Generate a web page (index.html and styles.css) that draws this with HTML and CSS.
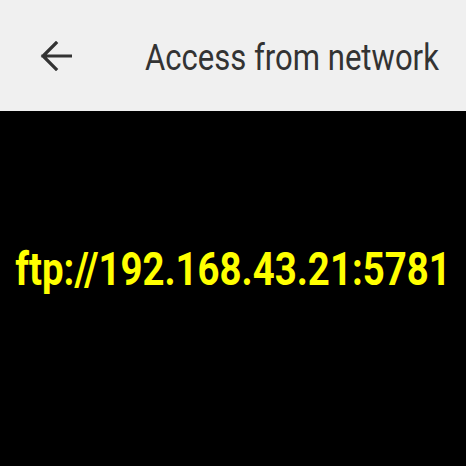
FILE: index.html
```html
<!DOCTYPE html>
<html>
<head>
<meta charset="utf-8">
<link rel="stylesheet" href="styles.css">
</head>
<body>
<header class="bar">
  <svg class="back" width="32" height="30" viewBox="0 0 32 30" aria-hidden="true">
    <path d="M31 15H3M16 2L3 15l13 13" fill="none" stroke="#333" stroke-width="3.2" stroke-linecap="square" stroke-linejoin="miter"/>
  </svg>
  <h1 class="title">Access from network</h1>
</header>
<main class="content">
  <p class="url">ftp://192.168.43.21:5781</p>
</main>
</body>
</html>
```
FILE: styles.css
```css
html, body {
  margin: 0;
  padding: 0;
  width: 466px;
  height: 466px;
  background: #000;
  overflow: hidden;
}
.bar {
  height: 111px;
  background: #f0f0f0;
  display: flex;
  align-items: flex-start;
  padding: 40px 0 0 40px;
  box-sizing: border-box;
}
.back {
  display: block;
  flex-shrink: 0;
  margin-top: 1px;
}
.title {
  flex-shrink: 0;
  margin: 0 0 0 73px;
  font-family: Roboto, "Noto Sans", sans-serif;
  font-weight: 400;
  font-size: 36px;
  line-height: 1;
  color: #333;
  white-space: nowrap;
  transform: scaleX(0.863);
  transform-origin: left center;
}
.content {
  height: 355px;
  padding-top: 135px;
  box-sizing: border-box;
  display: flex;
  justify-content: center;
  align-items: flex-start;
}
.url {
  flex-shrink: 0;
  margin: 0;
  font-family: Roboto, "Noto Sans", sans-serif;
  font-weight: 700;
  font-size: 46px;
  line-height: 1;
  color: #ffff00;
  white-space: nowrap;
  transform: scaleX(0.834);
}
```
